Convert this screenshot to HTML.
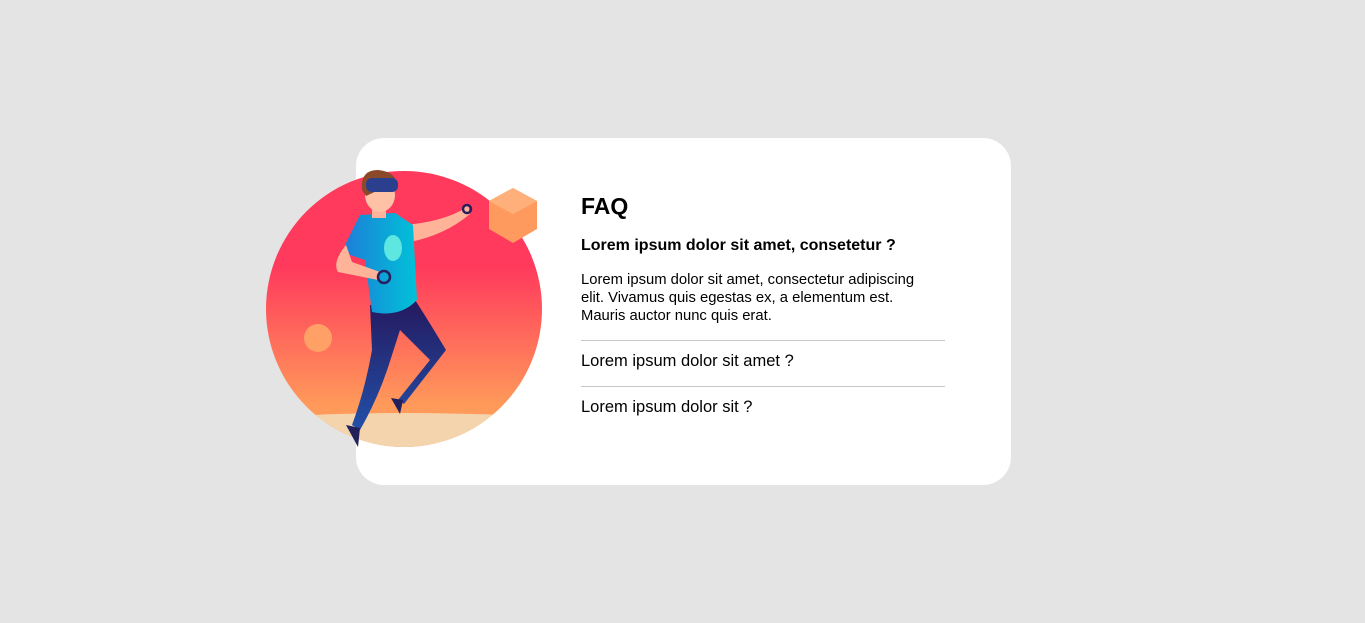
<!DOCTYPE html><html><head><style>
body{margin:0;width:1365px;height:623px;background:#e4e4e4;font-family:"Liberation Sans",Arial,sans-serif;position:relative;overflow:hidden}
.card{position:absolute;left:356px;top:138px;width:655px;height:347px;background:#fff;border-radius:28px}
.t{position:absolute;left:581px;color:#000;margin:0;white-space:nowrap}
hr{position:absolute;left:581px;width:364px;margin:0;border:0;border-top:1px solid #c8c8c8}
</style></head><body>
<div class="card"></div>
<svg style="position:absolute;left:0;top:0" width="1365" height="623">
<defs>
<linearGradient id="g" x1="0" y1="0" x2="0" y2="1"><stop offset="0.35" stop-color="#ff3a5c"/><stop offset="0.85" stop-color="#ff9a5a"/></linearGradient>
<linearGradient id="p" x1="0" y1="0" x2="0" y2="1"><stop offset="0" stop-color="#25195e"/><stop offset="1" stop-color="#2250a8"/></linearGradient>
<linearGradient id="s" x1="0" y1="0" x2="1" y2="0"><stop offset="0" stop-color="#1d7fd8"/><stop offset="1" stop-color="#00c2d8"/></linearGradient>
<clipPath id="c"><circle cx="404" cy="309" r="138"/></clipPath>
</defs>
<circle cx="404" cy="309" r="138" fill="url(#g)"/>
<path d="M260 418 Q400 408 560 418 L560 460 L260 460Z" fill="#f3d4ac" clip-path="url(#c)"/>
<circle cx="318" cy="338" r="14" fill="#ffa066"/>
<polygon points="513,188 537,201 537,229 513,243 489,229 489,201" fill="#ff9a5e"/>
<polygon points="513,188 537,201 513,214 489,201" fill="#ffb07a"/>
<path d="M405 225 Q440 222 462 210 L468 204 L470 214 Q445 235 410 242Z" fill="#ffb49a"/>
<circle cx="467" cy="209" r="4" fill="none" stroke="#2a1f5e" stroke-width="2.5"/>
<path d="M370 305 L372 350 Q365 390 352 425 L360 430 Q380 395 392 355 L400 330 L430 360 L398 400 L404 404 L446 350 Q425 315 415 300Z" fill="url(#p)"/>
<path d="M346 425 L358 447 L360 428Z" fill="#22205a"/>
<path d="M391 398 L400 414 L403 400Z" fill="#22205a"/>
<path d="M360 215 L395 213 L413 225 L417 300 Q400 318 372 312 L365 260 L350 255 L345 245Z" fill="url(#s)"/>
<ellipse cx="393" cy="248" rx="9" ry="13" fill="#5ee6e0"/>
<path d="M346 245 Q332 262 338 272 L378 280 L380 272 L352 262Z" fill="#ffb49a"/>
<circle cx="384" cy="277" r="6" fill="none" stroke="#2a1f5e" stroke-width="2.5"/>
<rect x="372" y="200" width="14" height="18" fill="#ffb49a"/>
<ellipse cx="380" cy="195" rx="15" ry="17" fill="#ffc2a6"/>
<path d="M362 190 Q360 170 378 170 Q395 172 396 182 L366 196Z" fill="#8a4a2a"/>
<rect x="366" y="178" width="32" height="14" rx="6" fill="#2b3f8f"/>
</svg>
<h1 class="t" style="top:193px;font-size:23px;font-weight:bold">FAQ</h1>
<p class="t" style="top:237px;font-size:16px;font-weight:bold">Lorem ipsum dolor sit amet, consetetur ?</p>
<p class="t" style="top:271px;font-size:14.8px;line-height:18px">Lorem ipsum dolor sit amet, consectetur adipiscing<br>elit. Vivamus quis egestas ex, a elementum est.<br>Mauris auctor nunc quis erat.</p>
<hr style="top:340px">
<p class="t" style="top:352px;font-size:16.5px">Lorem ipsum dolor sit amet ?</p>
<hr style="top:386px">
<p class="t" style="top:398px;font-size:16.5px">Lorem ipsum dolor sit ?</p>
</body></html>
